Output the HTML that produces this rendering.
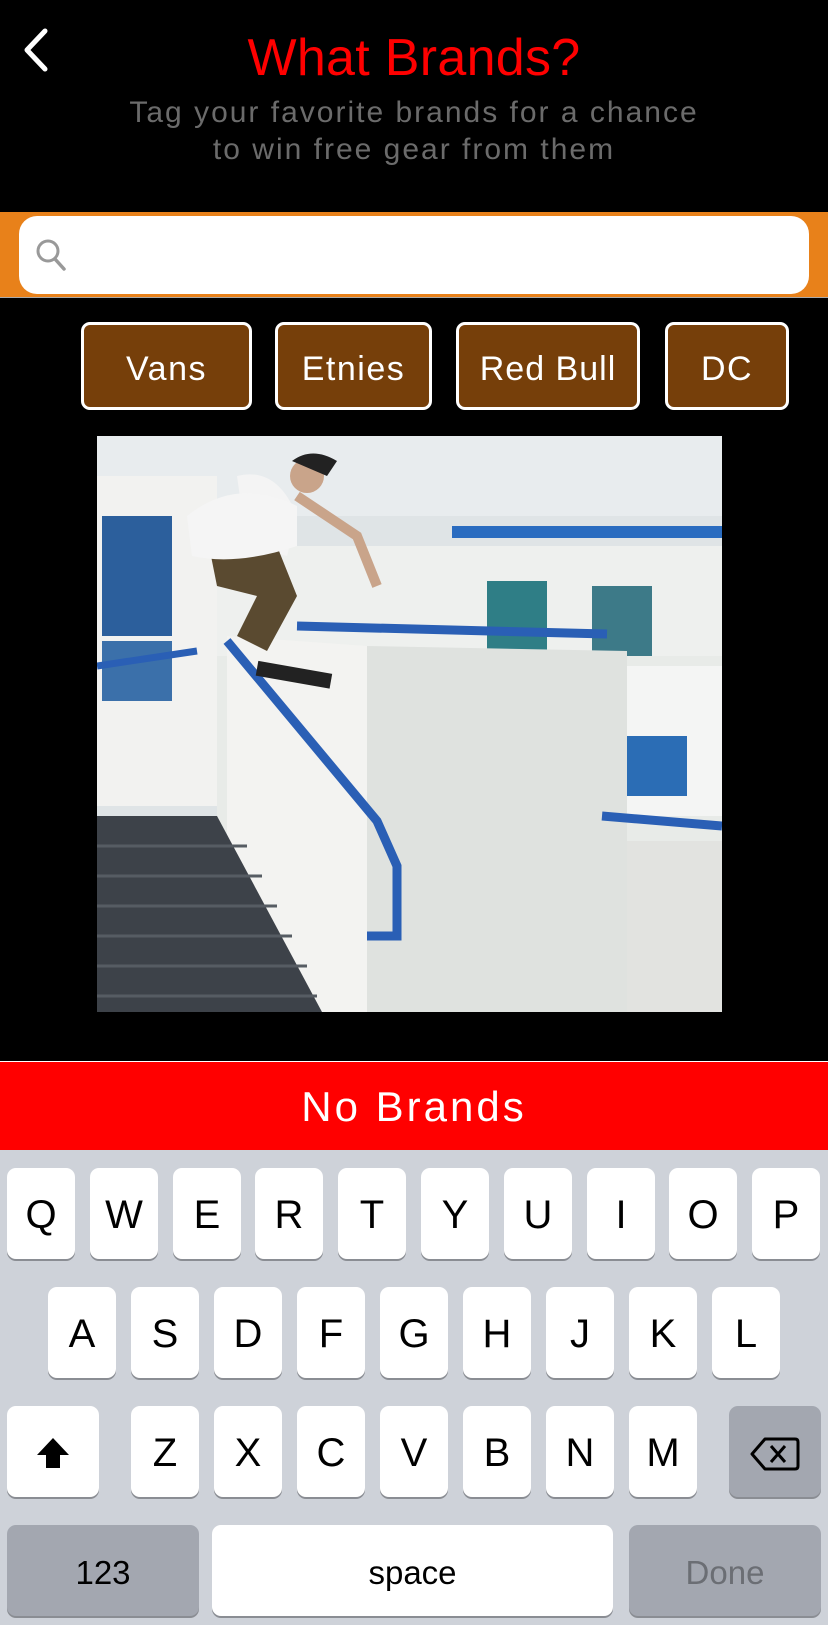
<!DOCTYPE html>
<html><head><meta charset="utf-8"><style>
*{margin:0;padding:0;box-sizing:border-box}
body{width:828px;height:1625px;background:#000;position:relative;overflow:hidden;font-family:"Liberation Sans",sans-serif}
.a{position:absolute}
.title{left:0;width:828px;top:28px;text-align:center;color:#f00;font-size:52px;letter-spacing:0.3px}
.sub{left:0;width:828px;top:94px;text-align:center;color:#6b6b6b;font-size:30px;line-height:37px;letter-spacing:2px}
.bar{left:0;top:212px;width:828px;height:86px;background:#e8811a;border-bottom:1px solid #aaa}
.inp{left:19px;top:216px;width:790px;height:78px;background:#fff;border-radius:18px}
.btn{top:322px;height:88px;padding-top:6px;background:#763f0a;border:3px solid #fff;border-radius:9px;color:#fff;font-size:34px;letter-spacing:1.5px;display:flex;align-items:center;justify-content:center}
.red{left:0;top:1061px;width:828px;height:89px;background:#f00;border-top:1px solid #fff;color:#fff;font-size:42px;letter-spacing:3px;text-align:center;line-height:90px}
.kb{left:0;top:1150px;width:828px;height:475px;background:#ced2d9}
.k{width:68px;height:91px;background:#fff;border-radius:9px;box-shadow:0 2px 0 #8a8d93;font-size:40px;padding-top:4px;color:#000;display:flex;align-items:center;justify-content:center}
.g{background:#a3a7b0}
</style></head><body>
<svg class="a" style="left:18px;top:27px" width="34" height="46" viewBox="0 0 34 46"><path d="M27 4 L9 23 L27 42" fill="none" stroke="#fff" stroke-width="5" stroke-linecap="round" stroke-linejoin="round"/></svg>
<div class="a title">What Brands?</div>
<div class="a sub">Tag your favorite brands for a chance<br>to win free gear from them</div>
<div class="a bar"></div>
<div class="a inp"></div>
<svg class="a" style="left:34px;top:236px" width="36" height="38" viewBox="0 0 36 38"><circle cx="14" cy="15" r="10" fill="none" stroke="#999" stroke-width="3"/><path d="M21 23 L30 33" stroke="#999" stroke-width="3.5" stroke-linecap="round"/></svg>
<div class="a btn" style="left:81px;width:171px">Vans</div>
<div class="a btn" style="left:275px;width:157px">Etnies</div>
<div class="a btn" style="left:456px;width:184px;letter-spacing:1px">Red Bull</div>
<div class="a btn" style="left:665px;width:124px">DC</div>
<svg class="a" style="left:97px;top:436px" width="625" height="576" viewBox="0 0 625 576">
<rect width="625" height="576" fill="#dfe4e6"/>
<rect x="0" y="0" width="625" height="80" fill="#e8ecee"/>
<rect x="0" y="40" width="120" height="330" fill="#f2f2f0"/>
<rect x="5" y="80" width="70" height="120" fill="#2c5f9c"/>
<rect x="5" y="205" width="70" height="60" fill="#3b70aa"/>
<rect x="120" y="110" width="505" height="200" fill="#eef0ee"/>
<rect x="355" y="90" width="270" height="12" fill="#2a6cc0"/>
<rect x="390" y="145" width="60" height="80" fill="#2f7e86"/>
<rect x="495" y="150" width="60" height="80" fill="#3d7a88"/>
<rect x="120" y="220" width="510" height="356" fill="#e8ebe8"/>
<polygon points="130,200 270,210 270,576 130,576" fill="#f3f3f1"/>
<polygon points="270,210 530,215 530,576 270,576" fill="#dfe2df"/>
<rect x="530" y="230" width="95" height="150" fill="#f4f5f4"/>
<rect x="530" y="300" width="60" height="60" fill="#2b6db5"/>
<rect x="530" y="405" width="95" height="171" fill="#e2e3e0"/>
<polygon points="0,380 120,380 225,576 0,576" fill="#3d4249"/>
<g stroke="#565c63" stroke-width="3"><line x1="0" y1="410" x2="150" y2="410"/><line x1="0" y1="440" x2="165" y2="440"/><line x1="0" y1="470" x2="180" y2="470"/><line x1="0" y1="500" x2="195" y2="500"/><line x1="0" y1="530" x2="210" y2="530"/><line x1="0" y1="560" x2="220" y2="560"/></g>
<path d="M130 205 L280 385 L300 430 L300 500 L270 500" fill="none" stroke="#2a5fb5" stroke-width="9"/>
<path d="M200 190 L510 198" stroke="#2a5fb5" stroke-width="9"/>
<path d="M505 380 L625 390" stroke="#2a5fb5" stroke-width="9"/>
<path d="M0 230 L100 215" stroke="#2a5fb5" stroke-width="7"/>
<path d="M140 40 Q180 30 200 80 L190 120 L150 110 Z" fill="#f4f4f4"/>
<path d="M110 100 L180 110 L200 160 L170 215 L140 200 L160 160 L120 150 Z" fill="#5a4a30"/>
<circle cx="210" cy="40" r="17" fill="#c9a48a"/>
<path d="M195 25 Q215 10 240 25 L230 40 Z" fill="#222"/>
<path d="M90 80 Q140 40 200 70 L200 110 Q140 130 95 120 Z" fill="#f5f5f5"/>
<path d="M200 60 L260 100 L280 150" fill="none" stroke="#c9a48a" stroke-width="10"/>
<rect x="160" y="230" width="75" height="15" fill="#222" transform="rotate(10 190 235)"/>
</svg>
<div class="a red">No Brands</div>
<div class="a kb"></div>
<div class="a" style="left:0;top:1168px;width:828px">
<div class="a k" style="left:7px">Q</div><div class="a k" style="left:90px">W</div><div class="a k" style="left:173px">E</div><div class="a k" style="left:255px">R</div><div class="a k" style="left:338px">T</div><div class="a k" style="left:421px">Y</div><div class="a k" style="left:504px">U</div><div class="a k" style="left:587px">I</div><div class="a k" style="left:669px">O</div><div class="a k" style="left:752px">P</div>
</div>
<div class="a" style="left:0;top:1287px;width:828px">
<div class="a k" style="left:48px">A</div><div class="a k" style="left:131px">S</div><div class="a k" style="left:214px">D</div><div class="a k" style="left:297px">F</div><div class="a k" style="left:380px">G</div><div class="a k" style="left:463px">H</div><div class="a k" style="left:546px">J</div><div class="a k" style="left:629px">K</div><div class="a k" style="left:712px">L</div>
</div>
<div class="a" style="left:0;top:1406px;width:828px">
<div class="a k" style="left:7px;width:92px"><svg width="40" height="40" viewBox="0 0 40 40"><path d="M20 4 L36 21 L27 21 L27 34 L13 34 L13 21 L4 21 Z" fill="#000"/></svg></div>
<div class="a k" style="left:131px">Z</div><div class="a k" style="left:214px">X</div><div class="a k" style="left:297px">C</div><div class="a k" style="left:380px">V</div><div class="a k" style="left:463px">B</div><div class="a k" style="left:546px">N</div><div class="a k" style="left:629px">M</div>
<div class="a k g" style="left:729px;width:92px"><svg width="52" height="40" viewBox="0 0 52 40"><path d="M16 5 L46 5 Q49 5 49 8 L49 32 Q49 35 46 35 L16 35 L3 20 Z" fill="none" stroke="#000" stroke-width="3" stroke-linejoin="round"/><path d="M22 12 L36 28 M36 12 L22 28" stroke="#000" stroke-width="3"/></svg></div>
</div>
<div class="a" style="left:0;top:1525px;width:828px">
<div class="a k g" style="left:7px;width:192px;font-size:33px">123</div>
<div class="a k" style="left:212px;width:401px;font-size:33px">space</div>
<div class="a k g" style="left:629px;width:192px;font-size:33px;color:#6b6e74">Done</div>
</div>
</body></html>
